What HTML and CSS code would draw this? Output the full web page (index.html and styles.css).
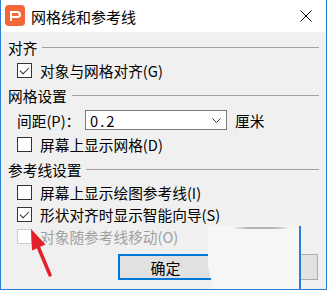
FILE: index.html
```html
<!DOCTYPE html>
<html>
<head>
    <meta charset="utf-8">
    <title>网格线和参考线</title>
    <link rel="stylesheet" href="styles.css">
</head>
<body>
    <div class="window">
        <div class="titlebar">
            <svg class="app-icon" width="20" height="21" viewBox="0 0 20 21">
                <rect x="0" y="0" width="20" height="21" rx="4" fill="#f3683a"/>
                <path d="M6 16 V7 H12 Q15 7 15 9.5 Q15 12 12 12 H6" fill="none" stroke="#fff" stroke-width="2"/>
            </svg>
            <span class="title">网格线和参考线</span>
            <svg class="close" width="12" height="12" viewBox="0 0 12 12">
                <path d="M0.5 0.5 L11.5 11.5 M11.5 0.5 L0.5 11.5" stroke="#000" stroke-width="1"/>
            </svg>
        </div>

        <div class="content">
            <div class="group">
                <div class="legend"><span>对齐</span><span class="rule"></span></div>
                <div class="check-row">
                    <span class="box checked"></span>
                    <span>对象与网格对齐(G)</span>
                </div>
            </div>

            <div class="group">
                <div class="legend"><span>网格设置</span><span class="rule"></span></div>
                <div class="field-row">
                    <span class="field-label">间距(P)：</span>
                    <div class="select">
                        <span>0.2</span>
                        <svg width="9" height="5" viewBox="0 0 9 5">
                            <path d="M0.5 0.5 L4.5 4.5 L8.5 0.5" fill="none" stroke="#333" stroke-width="1"/>
                        </svg>
                    </div>
                    <span>厘米</span>
                </div>
                <div class="check-row">
                    <span class="box"></span>
                    <span>屏幕上显示网格(D)</span>
                </div>
            </div>

            <div class="group">
                <div class="legend"><span>参考线设置</span><span class="rule"></span></div>
                <div class="check-row">
                    <span class="box"></span>
                    <span>屏幕上显示绘图参考线(I)</span>
                </div>
                <div class="check-row">
                    <span class="box checked"></span>
                    <span>形状对齐时显示智能向导(S)</span>
                </div>
                <div class="check-row disabled">
                    <span class="box"></span>
                    <span>对象随参考线移动(O)</span>
                </div>
            </div>

            <div class="buttons">
                <button class="btn default">确定</button>
                <button class="btn"></button>
            </div>
        </div>

        <!-- erased patch over the cancel button -->
        <div class="patch"></div>

        <svg class="arrow" width="60" height="60" viewBox="0 0 60 60">
            <line x1="49" y1="50" x2="36" y2="19" stroke="#e3202b" stroke-width="3.5" stroke-linecap="round"/>
            <polygon points="30,4 44.5,19.5 31,25.5" fill="#e3202b"/>
        </svg>
    </div>
</body>
</html>
```

FILE: styles.css
```css
body {
    margin: 0;
    background: #fff;
    font-family: "Noto Sans CJK SC", sans-serif;
    font-size: 14.7px;
    color: #000;
}

.window {
    position: relative;
    width: 325px;
    height: 289px;
    border: 1px solid #2a7fd4;
    border-top: none;
    background: #f0f0f0;
    overflow: hidden;
}

.titlebar {
    height: 32px;
    background: #fff;
    display: flex;
    align-items: center;
    padding-left: 4px;
}

.app-icon {
    margin-top: -1px;
}

.title {
    margin-left: 6px;
    font-size: 15px;
}

.close {
    margin-left: auto;
    margin-right: 14px;
}

.content {
    padding: 3px 0 0 0;
}

.group {
    margin-bottom: 2px;
}

.legend {
    height: 24px;
    display: flex;
    align-items: center;
    padding-left: 7px;
}

.rule {
    flex: 1;
    height: 1px;
    background: #a0a0a0;
    margin: 0 7px 0 5px;
}

.check-row {
    height: 22px;
    display: flex;
    align-items: center;
    padding-left: 16px;
}

.box {
    width: 13px;
    height: 13px;
    border: 1px solid #333;
    background: #fff;
    margin-right: 8px;
    position: relative;
}

.box.checked::after {
    content: "";
    position: absolute;
    left: 2px;
    top: 1px;
    width: 8px;
    height: 4px;
    border-left: 1.3px solid #333;
    border-bottom: 1.3px solid #333;
    transform: translate(0, 2px) rotate(-45deg);
}

.disabled {
    color: #a0a0a0;
}

.disabled .box {
    border-color: #cccccc;
}

.field-row {
    height: 26px;
    display: flex;
    align-items: center;
    padding-left: 16px;
}

.field-label {
    width: 68px;
}

.select {
    width: 140px;
    height: 18px;
    border: 1px solid #7a7a7a;
    background: #fff;
    display: flex;
    align-items: center;
    justify-content: space-between;
    padding: 0 5px 0 4px;
    box-sizing: content-box;
    margin-right: 8px;
    width: 131px;
    letter-spacing: 2px;
}

.buttons {
    margin-top: 7px;
    display: flex;
    gap: 10px;
    padding-left: 117px;
}

.btn {
    width: 95px;
    height: 26px;
    background: #e1e1e1;
    border: 1px solid #adadad;
    font-family: inherit;
    font-size: 15px;
    padding: 0;
}

.btn.default {
    border: 2px solid #0078d7;
}

.patch {
    position: absolute;
    left: 207px;
    top: 226px;
    width: 91px;
    height: 66px;
    background: #f6f6f6;
    border-right: 2px solid #2a7fd4;
    clip-path: polygon(0 0, 100% 0, 100% 100%, 6px 100%, 0 40px);
}

.patch::before {
    content: "";
    position: absolute;
    left: 23px;
    top: 1px;
    width: 60px;
    height: 2px;
    background: linear-gradient(to right, #f6f6f6, #b4b4b4 30%, #b4b4b4 70%, #f6f6f6);
}

.arrow {
    position: absolute;
    left: 0;
    top: 225px;
}
```
